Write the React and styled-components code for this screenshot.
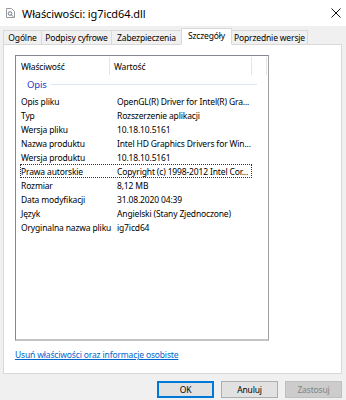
import React from "react";
import styled, { createGlobalStyle } from "styled-components";

const GlobalStyle = createGlobalStyle`
  html, body {
    margin: 0;
    padding: 0;
    background: #f0f0f0;
  }
  body {
    font-family: "Segoe UI", "Noto Sans", "Liberation Sans", sans-serif;
    font-size: 8.5px;
    letter-spacing: -0.15px;
    color: #000;
  }
`;

const tabs = ["Ogólne", "Podpisy cyfrowe", "Zabezpieczenia", "Szczegóły", "Poprzednie wersje"];
const tabWidths = [39, 71, 71, 51, 77];

const rows = [
  ["Opis pliku", "OpenGL(R) Driver for Intel(R) Gra..."],
  ["Typ", "Rozszerzenie aplikacji"],
  ["Wersja pliku", "10.18.10.5161"],
  ["Nazwa produktu", "Intel HD Graphics Drivers for Win..."],
  ["Wersja produktu", "10.18.10.5161"],
  ["Prawa autorskie", "Copyright (c) 1998-2012 Intel Cor..."],
  ["Rozmiar", "8,12 MB"],
  ["Data modyfikacji", "31.08.2020 04:39"],
  ["Język", "Angielski (Stany Zjednoczone)"],
  ["Oryginalna nazwa pliku", "ig7icd64"],
];

function FileIcon() {
  return (
    <svg width="9" height="10" viewBox="0 0 9 10">
      <path d="M0.5 0.5h5l3 3v6h-8z" fill="#fff" stroke="#9a9a9a" />
      <circle cx="4" cy="5.5" r="1.8" fill="none" stroke="#6d7a8a" />
      <path d="M5.3 6.8l2 2" stroke="#6d7a8a" />
    </svg>
  );
}

function CloseIcon() {
  return (
    <svg width="10" height="10" viewBox="0 0 10 10">
      <path d="M0.5 0.5l9 9M9.5 0.5l-9 9" stroke="#111" strokeWidth="1" />
    </svg>
  );
}

export default function App() {
  return (
    <>
      <GlobalStyle />
      <Window>
        <TitleBar>
          <TitleLeft>
            <FileIcon />
            <Title>Właściwości: ig7icd64.dll</Title>
          </TitleLeft>
          <CloseIcon />
        </TitleBar>
        <Body>
          <TabStrip>
            {tabs.map((t, i) => (
              <Tab key={t} $active={i === 3} style={{ width: tabWidths[i] }}>
                {t}
              </Tab>
            ))}
          </TabStrip>
          <Panel>
            <ListView>
              <Header>
                <HeadCell $w={94}>Właściwość</HeadCell>
                <HeadCell $w={142} $pad={4}>Wartość</HeadCell>
                <HeadCell $w={15} />
              </Header>
              <Group>
                <GroupLabel>Opis</GroupLabel>
                <GroupLine />
              </Group>
              {rows.map(([k, v]) => (
                <Row key={k} $focus={k === "Prawa autorskie"}>
                  <Cell $w={94}>{k}</Cell>
                  <Cell $w={138} $pad={3}>{v}</Cell>
                </Row>
              ))}
            </ListView>
            <Link>Usuń właściwości oraz informacje osobiste</Link>
          </Panel>
          <Buttons>
            <Button $default>OK</Button>
            <Button>Anuluj</Button>
            <Button $disabled>Zastosuj</Button>
          </Buttons>
        </Body>
      </Window>
    </>
  );
}

const Window = styled.div`
  width: 346px;
  height: 400px;
  display: flex;
  flex-direction: column;
  overflow: hidden;
`;

const TitleBar = styled.div`
  height: 26px;
  background: #fff;
  display: flex;
  align-items: center;
  justify-content: space-between;
  padding: 0 5px 0 6px;
  box-sizing: border-box;
`;

const TitleLeft = styled.div`
  display: flex;
  align-items: center;
  gap: 7px;
`;

const Title = styled.span`
  font-size: 11px;
  letter-spacing: -0.1px;
  color: #000;
`;

const Body = styled.div`
  flex: 1;
  display: flex;
  flex-direction: column;
  padding: 2px 4px 0 3px;
`;

const TabStrip = styled.div`
  display: flex;
  align-items: flex-end;
  height: 17px;
  position: relative;
  z-index: 1;
  margin-bottom: -1px;
`;

const Tab = styled.div`
  box-sizing: border-box;
  height: ${(p) => (p.$active ? "17px" : "15px")};
  margin-left: -1px;
  background: ${(p) => (p.$active ? "#fff" : "#f0f0f0")};
  border: 1px solid #d9d9d9;
  border-bottom: ${(p) => (p.$active ? "1px solid #fff" : "1px solid #d9d9d9")};
  display: flex;
  align-items: ${(p) => (p.$active ? "flex-start" : "center")};
  padding-top: ${(p) => (p.$active ? "1px" : "0")};
  justify-content: center;
  white-space: nowrap;
  position: relative;
  z-index: ${(p) => (p.$active ? 2 : 1)};
  &:first-child {
    margin-left: 0;
  }
`;

const Panel = styled.div`
  box-sizing: border-box;
  height: 330px;
  background: #fff;
  border: 1px solid #d9d9d9;
  padding: 10px 0 0 11px;
  display: flex;
  flex-direction: column;
`;

const ListView = styled.div`
  box-sizing: border-box;
  width: 254px;
  height: 286px;
  border: 1px solid #828790;
  border-right-color: #a0a0a0;
  border-bottom: 2px solid #c4c4c4;
  background: #fff;
  overflow: hidden;
`;

const Header = styled.div`
  display: flex;
  height: 20px;
  align-items: stretch;
`;

const HeadCell = styled.div`
  width: ${(p) => p.$w}px;
  box-sizing: border-box;
  padding-left: ${(p) => p.$pad ?? 5}px;
  display: flex;
  align-items: center;
  border-right: 1px solid #e5e5e5;
  margin: 1px 0;
  white-space: nowrap;
`;

const Group = styled.div`
  display: flex;
  align-items: center;
  height: 16px;
  padding-left: 11px;
  gap: 4px;
  margin-bottom: 2px;
`;

const GroupLabel = styled.span`
  color: #1e3ec8;
  font-size: 9.5px;
`;

const GroupLine = styled.div`
  width: 206px;
  height: 1px;
  background: #dde6f3;
`;

const Row = styled.div`
  display: flex;
  height: 14px;
  align-items: center;
  margin-left: 4px;
  width: 232px;
  box-sizing: border-box;
  outline: ${(p) => (p.$focus ? "1px dotted #333" : "none")};
  outline-offset: -1px;
`;

const Cell = styled.div`
  width: ${(p) => p.$w}px;
  box-sizing: border-box;
  padding-left: ${(p) => p.$pad ?? 1}px;
  white-space: nowrap;
`;

const Link = styled.a`
  margin-top: 8px;
  color: #0066cc;
  text-decoration: underline;
  cursor: pointer;
`;

const Buttons = styled.div`
  display: flex;
  justify-content: flex-end;
  gap: 7px;
  margin-top: 7px;
`;

const Button = styled.button`
  box-sizing: border-box;
  width: 57px;
  height: 17px;
  padding: 0;
  font-family: inherit;
  font-size: 8.5px;
  letter-spacing: -0.15px;
  background: ${(p) => (p.$disabled ? "#cccccc" : "#e1e1e1")};
  color: ${(p) => (p.$disabled ? "#838383" : "#000")};
  border: 1px solid ${(p) => (p.$default ? "#0078d7" : p.$disabled ? "#bfbfbf" : "#adadad")};
  box-shadow: ${(p) => (p.$default ? "inset 0 0 0 1px #0078d7" : "none")};
`;
